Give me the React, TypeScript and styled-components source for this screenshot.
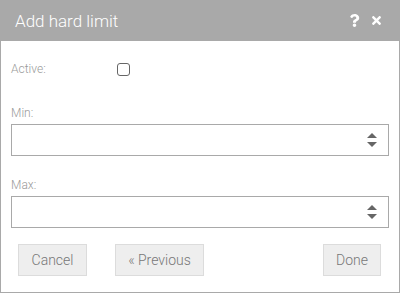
import React from "react";
import styled, { createGlobalStyle } from "styled-components";
import { FaQuestion, FaTimes } from "react-icons/fa";

const Global = createGlobalStyle`
  html, body {
    margin: 0;
    padding: 0;
    background: #ffffff;
    font-family: Roboto, "Liberation Sans", sans-serif;
  }
`;

const Dialog = styled.div`
  width: 400px;
  height: 293px;
  box-sizing: border-box;
  border: 1px solid #a9a9a9;
  border-top: none;
  display: flex;
  flex-direction: column;
  background: #fff;
`;

const Header = styled.div`
  height: 41px;
  margin: 0 -1px;
  background: #a9a9a9;
  display: flex;
  align-items: center;
  justify-content: space-between;
  padding: 0 17px 0 15px;
`;

const Title = styled.div`
  color: #fff;
  font-size: 17px;
  font-weight: 300;
  padding-top: 1px;
`;

const Tools = styled.div`
  display: flex;
  align-items: center;
  gap: 9px;
  color: #fff;
`;

const Body = styled.div`
  padding: 0 10px;
  display: flex;
  flex-direction: column;
`;

const CheckRow = styled.div`
  margin-top: 21px;
  height: 14px;
  display: flex;
  align-items: center;
`;

const Label = styled.div<{ $top?: number; $width?: number }>`
  font-size: 12px;
  font-weight: 300;
  line-height: 14px;
  color: #9a9a9a;
  margin-top: ${(p) => p.$top ?? 0}px;
  width: ${(p) => (p.$width ? `${p.$width}px` : "auto")};
`;

const Check = styled.div`
  width: 11px;
  height: 11px;
  border: 1.5px solid #666;
  border-radius: 3px;
  margin-left: 10px;
`;

const Field = styled.div`
  margin-top: 4px;
  height: 32px;
  box-sizing: border-box;
  border: 1px solid #a9a9a9;
  display: flex;
  align-items: center;
  justify-content: flex-end;
  padding-right: 11px;
`;

const Buttons = styled.div`
  margin-top: 16px;
  padding: 0 8px 0 7px;
  display: flex;
  align-items: center;
`;

const Button = styled.div<{ $width: number; $push?: boolean }>`
  width: ${(p) => p.$width}px;
  height: 32px;
  box-sizing: border-box;
  background: #eeeeee;
  border: 1px solid #dcdcdc;
  color: #777;
  font-size: 14px;
  font-weight: 300;
  display: flex;
  align-items: center;
  justify-content: center;
  margin-left: ${(p) => (p.$push ? "auto" : "0")};
`;

const Gap = styled.div<{ $w: number }>`
  width: ${(p) => p.$w}px;
`;

function Spinner() {
  return (
    <svg width="10" height="16" viewBox="0 0 10 16">
      <path d="M5 1 L10 6 L0 6 Z" fill="#666" />
      <path d="M0 10 L10 10 L5 15 Z" fill="#666" />
    </svg>
  );
}

export default function App() {
  return (
    <>
      <Global />
      <Dialog>
        <Header>
          <Title>Add hard limit</Title>
          <Tools>
            <FaQuestion size={13} />
            <FaTimes size={13} />
          </Tools>
        </Header>
        <Body>
          <CheckRow>
            <Label $width={96}>Active:</Label>
            <Check />
          </CheckRow>
          <Label $top={30}>Min:</Label>
          <Field>
            <Spinner />
          </Field>
          <Label $top={22}>Max:</Label>
          <Field>
            <Spinner />
          </Field>
          <Buttons>
            <Button $width={69}>Cancel</Button>
            <Gap $w={28} />
            <Button $width={89}>« Previous</Button>
            <Button $width={58} $push>
              Done
            </Button>
          </Buttons>
        </Body>
      </Dialog>
    </>
  );
}
